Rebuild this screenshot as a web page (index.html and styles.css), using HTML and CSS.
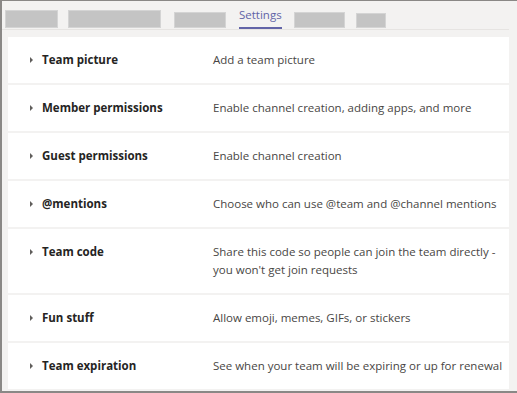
FILE: index.html
```html
<!doctype html>
<html lang="en">
  <head>
    <meta charset="UTF-8" />
    <meta name="viewport" content="width=device-width, initial-scale=1.0" />
    <title>Team settings</title>
    <link rel="stylesheet" href="styles.css">
  </head>
  <body>
    <div class="frame">
      <div class="tabs">
        <div class="tab-ph ph-1"></div>
        <div class="tab-ph ph-2"></div>
        <div class="tab-ph ph-3"></div>
        <div class="tab active">Settings</div>
        <div class="tab-ph ph-4"></div>
        <div class="tab-ph ph-5"></div>
      </div>

      <div class="settings">
        <div class="setting">
          <span class="caret"></span>
          <div class="title">Team picture</div>
          <div class="desc">Add a team picture</div>
        </div>
        <div class="setting">
          <span class="caret"></span>
          <div class="title">Member permissions</div>
          <div class="desc">Enable channel creation, adding apps, and more</div>
        </div>
        <div class="setting">
          <span class="caret"></span>
          <div class="title">Guest permissions</div>
          <div class="desc">Enable channel creation</div>
        </div>
        <div class="setting">
          <span class="caret"></span>
          <div class="title">@mentions</div>
          <div class="desc">Choose who can use @team and @channel mentions</div>
        </div>
        <div class="setting">
          <span class="caret"></span>
          <div class="title">Team code</div>
          <div class="desc">Share this code so people can join the team directly - you won't get join requests</div>
        </div>
        <div class="setting">
          <span class="caret"></span>
          <div class="title">Fun stuff</div>
          <div class="desc">Allow emoji, memes, GIFs, or stickers</div>
        </div>
        <div class="setting">
          <span class="caret"></span>
          <div class="title">Team expiration</div>
          <div class="desc">See when your team will be expiring or up for renewal</div>
        </div>
      </div>
    </div>
  </body>
</html>
```

FILE: styles.css
```css
* {
  box-sizing: border-box;
}
html, body {
  margin: 0;
  padding: 0;
}
body {
  font-family: 'Open Sans', 'Noto Sans', sans-serif;
  background-color: #f3f2f1;
}
.frame {
  height: 393px;
  overflow: hidden;
  background-color: #f3f2f1;
  border-top: 1px solid #8a8886;
  border-left: 2px solid #8a8886;
  border-bottom: 2px solid #8a8886;
}
.tabs {
  display: flex;
  align-items: flex-end;
  height: 29px;
  margin-right: 8px;
  padding-left: 3px;
  border-bottom: 1px solid #e6e4e2;
}
.tab-ph {
  background-color: #c4c4c4;
  border: 1px solid #d4d4d4;
  margin-bottom: 1px;
}
.ph-1 {
  width: 53px;
  height: 18px;
}
.ph-2 {
  width: 93px;
  height: 18px;
  margin-left: 10px;
}
.ph-3 {
  width: 52px;
  height: 16px;
  margin-left: 13px;
}
.ph-4 {
  width: 51px;
  height: 16px;
  margin-left: 12px;
}
.ph-5 {
  width: 30px;
  height: 15px;
  margin-left: 11px;
}
.tab {
  margin-left: 13px;
  font-size: 11.5px;
  line-height: 18px;
  color: #6264a7;
  padding-bottom: 3px;
  border-bottom: 2px solid #6264a7;
}
.settings {
  display: flex;
  flex-direction: column;
  gap: 2px;
  margin: 7px 8px 0 6px;
}
.setting {
  display: grid;
  grid-template-columns: 34px 171px 1fr;
  align-items: start;
  background-color: #fff;
  padding: 14px 0 14px 0;
  font-size: 11.5px;
  line-height: 18px;
}
.caret {
  width: 0;
  height: 0;
  margin: 6px 0 0 22px;
  border-top: 3px solid transparent;
  border-bottom: 3px solid transparent;
  border-left: 3px solid #605e5c;
}
.title {
  font-weight: 700;
  color: #252423;
}
.desc {
  color: #484644;
}
```
